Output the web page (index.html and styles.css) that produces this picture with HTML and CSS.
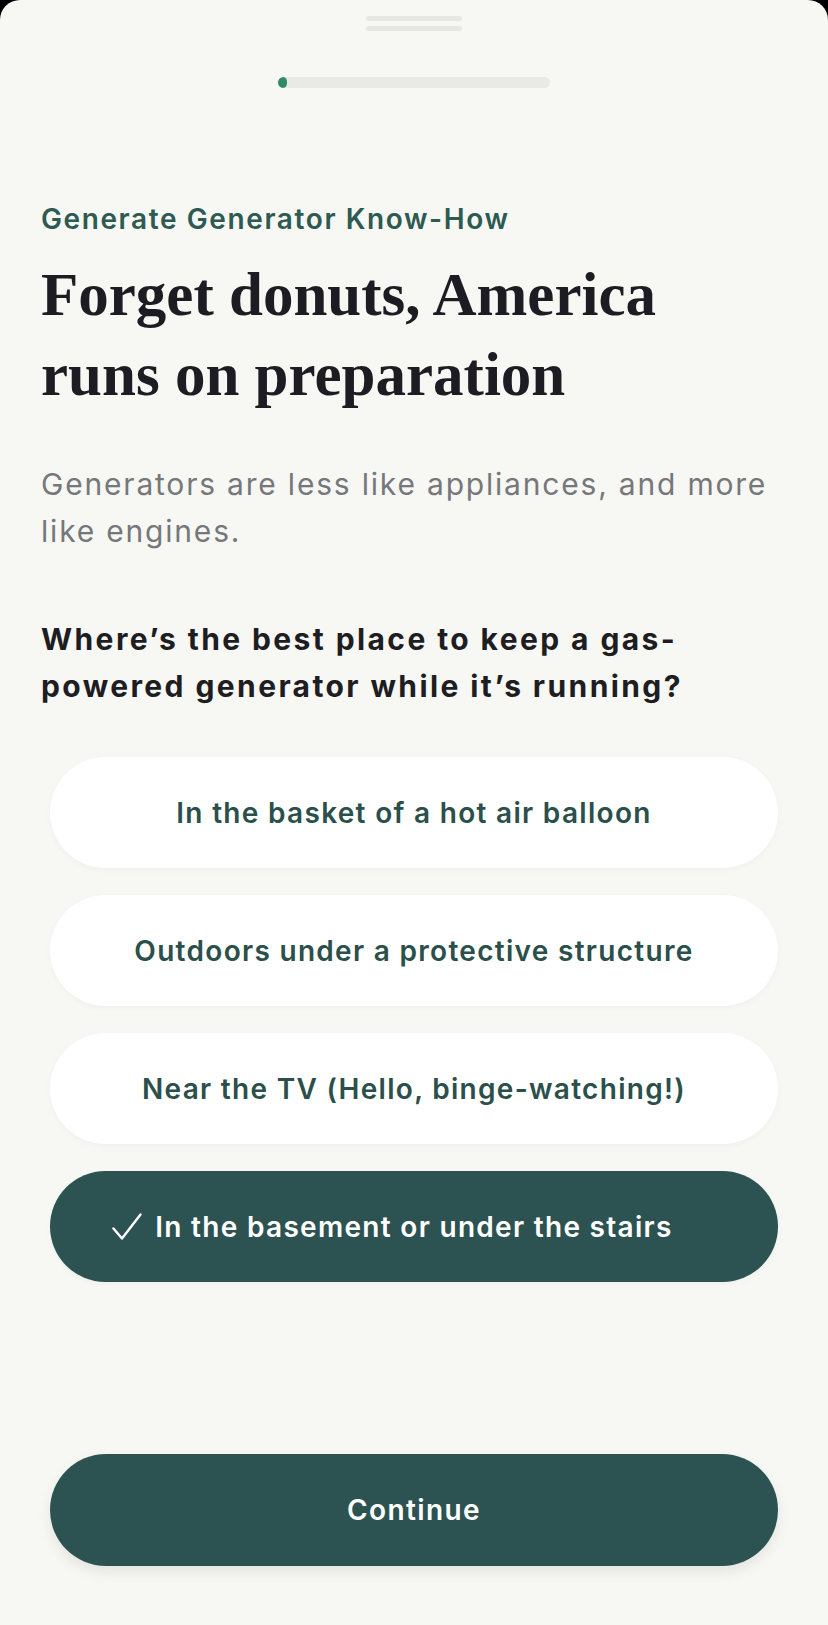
FILE: index.html
```html
<!DOCTYPE html>
<html lang="en">
<head>
  <meta charset="UTF-8">
  <meta name="viewport" content="width=device-width, initial-scale=1.0">
  <title>Generator Know-How</title>
  <link rel="stylesheet" href="styles.css">
</head>
<body>

  <div class="sheet">
    <!-- Alça do modal -->
    <div class="grabber">
      <span></span>
      <span></span>
    </div>

    <div class="progress">
      <div class="progress-fill"></div>
    </div>

    <div class="content">
      <p class="eyebrow">Generate Generator Know-How</p>
      <h1 class="title">Forget donuts, America runs on preparation</h1>
      <p class="subtitle">Generators are less like appliances, and more like engines.</p>
      <p class="question">Where’s the best place to keep a gas-powered generator while it’s running?</p>
    </div>

    <div class="options">
      <button class="option">In the basket of a hot air balloon</button>
      <button class="option">Outdoors under a protective structure</button>
      <button class="option">Near the TV (Hello, binge-watching!)</button>
      <button class="option selected">
        <span class="option-label">
          <svg class="check" width="30" height="27" viewBox="0 0 30 27">
            <polyline points="1.5,15.5 10,25.5 28.5,1.5" fill="none" stroke="#fff" stroke-width="2.4" stroke-linecap="round" stroke-linejoin="round"/>
          </svg>
          In the basement or under the stairs
        </span>
      </button>
    </div>

    <div class="footer">
      <button class="continue-btn">Continue</button>
    </div>
  </div>

</body>
</html>
```

FILE: styles.css
```css
/* Estilos gerais */
body {
  margin: 0;
  padding: 0;
  background-color: #000;
  font-family: Inter, "Noto Sans", sans-serif;
}

.sheet {
  min-height: 100vh;
  background-color: #f7f7f4;
  border-radius: 20px 20px 0 0;
  padding-top: 16px;
  display: flex;
  flex-direction: column;
  box-sizing: border-box;
}

/* Alça e progresso */
.grabber {
  display: flex;
  flex-direction: column;
  align-items: center;
  gap: 5px;
}

.grabber span {
  width: 96px;
  height: 5px;
  border-radius: 3px;
  background-color: #e7e7e4;
}

.progress {
  width: 272px;
  height: 11px;
  margin: 46px auto 0;
  border-radius: 6px;
  background-color: #e9e9e6;
  overflow: hidden;
}

.progress-fill {
  width: 9px;
  height: 100%;
  border-radius: 6px;
  background-color: #2f8a6b;
}

/* Textos */
.content {
  padding: 0 41px;
  margin-top: 114px;
}

.eyebrow {
  margin: 0;
  font-size: 28px;
  line-height: 34px;
  font-weight: 600;
  letter-spacing: 1.6px;
  color: #2d5a51;
}

.title {
  margin: 19px 0 0;
  font-family: "Liberation Serif", serif;
  font-size: 61px;
  line-height: 80px;
  font-weight: 700;
  color: #1d1c22;
  max-width: 680px;
}

.subtitle {
  margin: 46px 0 0;
  font-size: 30px;
  line-height: 47px;
  font-weight: 400;
  letter-spacing: 1.8px;
  color: #76777a;
}

.question {
  margin: 61px 0 0;
  font-size: 30px;
  line-height: 47px;
  font-weight: 700;
  letter-spacing: 2.4px;
  color: #1d1d22;
  max-width: 700px;
}

/* Opções */
.options {
  display: flex;
  flex-direction: column;
  gap: 27px;
  margin: 47px 50px 0;
}

.option {
  height: 111px;
  border: none;
  border-radius: 56px;
  background-color: #fff;
  box-shadow: 0 2px 6px rgba(0, 0, 0, 0.03);
  font-family: inherit;
  font-size: 28px;
  font-weight: 600;
  letter-spacing: 1.3px;
  color: #2b4f4a;
  cursor: pointer;
}

.option.selected {
  background-color: #2c5351;
  color: #fff;
}

.option-label {
  position: relative;
}

.check {
  position: absolute;
  right: calc(100% + 13px);
  top: 50%;
  margin-top: -14px;
}

/* Botão continuar */
.footer {
  margin-top: auto;
  padding: 0 50px 59px;
}

.continue-btn {
  width: 100%;
  height: 112px;
  border: none;
  border-radius: 56px;
  background-color: #2c5351;
  box-shadow: 0 6px 14px rgba(0, 0, 0, 0.08);
  font-family: inherit;
  font-size: 28px;
  font-weight: 600;
  letter-spacing: 1.4px;
  color: #fff;
  cursor: pointer;
}
```
